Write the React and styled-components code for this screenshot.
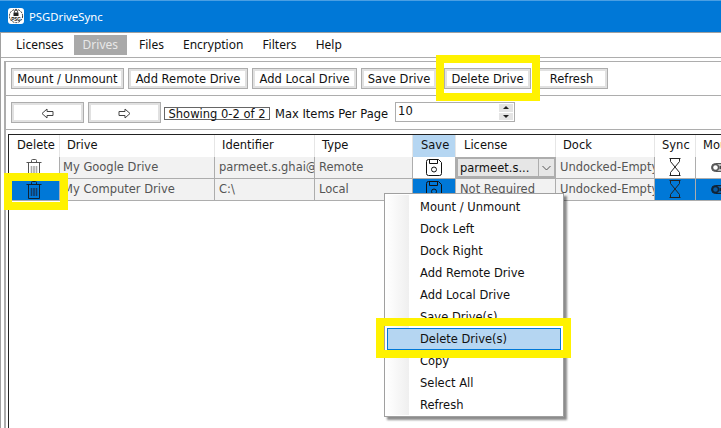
import React from 'react'
import styled, { createGlobalStyle } from 'styled-components'

const GlobalStyle = createGlobalStyle`
  html, body {
    margin: 0;
    padding: 0;
    background: #fff;
  }
`

const uiFont = `'DejaVu Sans', Verdana, sans-serif`
const titleFont = `'Noto Sans', 'Open Sans', sans-serif`

const Window = styled.div`
  position: relative;
  width: 721px;
  height: 428px;
  overflow: hidden;
  background: #fff;
  font-family: ${uiFont};
  font-size: 11.5px;
  color: #111;
`
const TitleBar = styled.div`
  display: flex;
  align-items: center;
  gap: 5px;
  height: 33px;
  padding-left: 8px;
  padding-bottom: 1px;
  box-sizing: border-box;
  background: #0078d7;
  border-top: 1px solid #4a9fe3;
  border-bottom: 1px solid #a0a0a0;
  color: #fff;
  font-family: ${titleFont};
  font-size: 11.3px;
`
const Body = styled.div`
  border-left: 1px solid #a0a0a0;
  height: 395px;
`
const MenuBar = styled.div`
  display: flex;
  align-items: center;
  height: 24px;
  padding-left: 6px;
  border-bottom: 1px solid #adadad;
  font-family: ${titleFont};
  font-size: 12px;
`
const MenuItem = styled.div`
  padding: 0 9px;
  margin-right: ${p => p.$after}px;
  height: 20px;
  line-height: 20px;
  background: ${p => (p.$active ? '#a9a9a9' : 'transparent')};
  color: ${p => (p.$active ? '#e8e8e8' : '#111')};
`
const Frame = styled.div`
  margin: 3px -10px 0 3px;
  border-top: 1px solid #adadad;
  border-left: 2px solid #adadad;
`
const ToolRow = styled.div`
  display: flex;
  align-items: flex-start;
  gap: 4px;
  height: 34px;
  padding: 6px 0 0 5px;
  box-sizing: border-box;
  border-bottom: 1px solid #adadad;
`
const Button = styled.button`
  width: ${p => p.$width}px;
  height: 21px;
  margin-left: ${p => p.$before || 0}px;
  padding: 1px 0 0;
  box-sizing: border-box;
  border: 1px solid #adadad;
  box-shadow: inset 0 0 0 2px #e1e1e1;
  background: #fff;
  font: inherit;
  color: inherit;
  display: flex;
  align-items: center;
  justify-content: center;
  flex: none;
`
const ShowingLabel = styled.div`
  width: 106px;
  height: 13px;
  margin: 5px 0 0 -1px;
  box-sizing: border-box;
  border: 1px solid #666;
  display: flex;
  align-items: center;
  justify-content: center;
  white-space: nowrap;
`
const PlainLabel = styled.div`
  margin: 5px 0 0 1px;
  white-space: nowrap;
`
const Spinner = styled.div`
  display: flex;
  width: 120px;
  height: 20px;
  margin-left: 3px;
  box-sizing: border-box;
  border: 1px solid #adadad;
`
const SpinnerValue = styled.div`
  flex: 1;
  padding: 0 0 0 2px;
  line-height: 17px;
`
const SpinnerButtons = styled.div`
  display: flex;
  flex-direction: column;
  gap: 1px;
  width: 14px;
  padding: 1px 1px 1px 0;
`
const SpinnerButton = styled.div`
  flex: 1;
  background: #e4e4e4;
  display: flex;
  align-items: center;
  justify-content: center;
  &::before {
    content: '';
    border-left: 3px solid transparent;
    border-right: 3px solid transparent;
    ${p => (p.$down ? 'border-top: 3px solid #222;' : 'border-bottom: 3px solid #222;')}
  }
`
const TableArea = styled.div`
  margin: 4px 0 0 2px;
  height: 300px;
  border-left: 1px solid #222;
  border-top: 1px solid #222;
`
const Row = styled.div`
  display: grid;
  grid-template-columns: 51px 155px 100px 98px 43px 100px 99px 41px 60px;
  height: 22px;
  box-sizing: border-box;
  border-bottom: ${p => (p.$head ? 'none' : '1px solid #adadad')};
`
const HeadCell = styled.div`
  padding-left: ${p => p.$pad}px;
  line-height: 21px;
  white-space: nowrap;
  overflow: hidden;
  border-right: 1px solid #e6e6e6;
  background: ${p => (p.$active ? '#b5d6f2' : '#fff')};
`
const Cell = styled.div`
  display: flex;
  align-items: center;
  padding: 0 0 2px ${p => p.$pad ?? 4}px;
  box-sizing: border-box;
  white-space: nowrap;
  overflow: hidden;
  color: #555;
  background: #f2f2f2;
  border-right: 1px solid #adadad;
`
const ComboCell = styled(Cell)`
  padding: 0;
`
const IconCell = styled.div`
  display: flex;
  justify-content: ${p => (p.$left ? 'flex-start' : 'center')};
  padding-left: ${p => (p.$left ? 15 : 0)}px;
  padding-top: 1px;
  box-sizing: border-box;
  overflow: hidden;
  background: ${p => (p.$selected ? '#0078d7' : '#fff')};
  border-right: 1px solid #adadad;
`
const Combo = styled.div`
  display: flex;
  width: 100px;
  height: 21px;
  box-sizing: border-box;
  border: 2px solid #adadad;
  background: #e6e6e6;
  color: #111;
  flex: none;
`
const ComboText = styled.div`
  flex: 1;
  padding-left: 2px;
  line-height: 19px;
`
const ComboArrow = styled.div`
  width: 15px;
  display: flex;
  align-items: center;
  justify-content: center;
  border-left: 1px solid #adadad;
`
const ContextMenu = styled.div`
  position: absolute;
  left: 384px;
  top: 193px;
  width: 180px;
  height: 224px;
  box-sizing: border-box;
  padding: 2px;
  background: #fff;
  border: 1px solid #a0a0a0;
  box-shadow: 3px 3px 2px rgba(0, 0, 0, 0.45);
  &::before {
    content: '';
    position: absolute;
    left: 1px;
    top: 1px;
    bottom: 1px;
    width: 23px;
    background: linear-gradient(to right, #fff, #efefef);
  }
`
const ContextItem = styled.div`
  position: relative;
  height: 22px;
  line-height: 22px;
  padding-left: 33px;
  box-sizing: border-box;
  white-space: nowrap;
  ${p => p.$active && `
    background: #b5d6f2;
    border: 1px solid #0078d7;
    line-height: 20px;
    padding-left: 32px;
  `}
`
const Highlight = styled.div`
  position: absolute;
  left: ${p => p.$x}px;
  top: ${p => p.$y}px;
  width: ${p => p.$w}px;
  height: ${p => p.$h}px;
  box-sizing: border-box;
  border: 8px solid #fff200;
`

const Logo = () => (
  <svg width="16" height="16" viewBox="0 0 16 16">
    <rect x="0" y="0" width="16" height="16" rx="3" fill="#fff" />
    <circle cx="8" cy="8" r="6.6" fill="none" stroke="#333" strokeWidth="1" strokeDasharray="2 1" />
    <rect x="5.5" y="4.5" width="5" height="3.5" fill="#222" />
    <path d="M6.5 4.5V3.5a1.5 1.5 0 0 1 3 0v1" fill="none" stroke="#222" />
    <text x="8" y="12.6" fontSize="4.6" fontWeight="700" textAnchor="middle" fontFamily="'Liberation Sans', sans-serif" fill="#111">PSG</text>
  </svg>
)

const ArrowIcon = ({ right }) => (
  <svg width="13" height="11" viewBox="0 0 13 11" style={{ transform: right ? 'scaleX(-1)' : 'none' }}>
    <path d="M1 5.5 6 1v2.5h6v4H6V10z" fill="#fff" stroke="#444" />
  </svg>
)

const TrashIcon = ({ color = '#555', bar = '#aaa' }) => (
  <svg width="16" height="19" viewBox="0 0 16 19">
    <path d="M0.5 4.5h15M5.5 4.5V2.5a1 1 0 0 1 1-1h3a1 1 0 0 1 1 1v2" fill="none" stroke={color} />
    <path d="M2.5 4.5V18.5H13.5V4.5" fill="none" stroke={color} />
    <path d="M5.5 8v8M8 8v8M10.5 8v8" stroke={bar} strokeWidth="1.6" />
  </svg>
)

const SaveIcon = () => (
  <svg width="16" height="17" viewBox="0 0 16 17" style={{ marginTop: 1 }}>
    <path d="M0.5 2.5a2 2 0 0 1 2-2h10l3 3v11a2 2 0 0 1-2 2h-11a2 2 0 0 1-2-2z" fill="none" stroke="#111" />
    <path d="M3.5 0.5v4h8v-4" fill="none" stroke="#111" />
    <circle cx="8" cy="10.5" r="2.5" fill="none" stroke="#111" />
  </svg>
)

const HourglassIcon = () => (
  <svg width="12" height="18" viewBox="0 0 12 18">
    <path d="M0.5 0.5h11M0.5 17.5h11M1.5 0.5v3L6 9 1.5 14.5v3M10.5 0.5v3L6 9l4.5 5.5v3" fill="none" stroke="#222" />
  </svg>
)

const ToggleIcon = ({ ring = '#555', track = '#bbb', knob = '#fff', dot = '#444' }) => (
  <svg width="16" height="9" viewBox="0 0 16 9" style={{ marginTop: 5 }}>
    <rect x="0.5" y="0.5" width="22" height="8" rx="4" fill={track} stroke={ring} />
    <circle cx="4.5" cy="4.5" r="3" fill={knob} stroke={ring} strokeWidth="1.4" />
    <rect x="8.5" y="3" width="7" height="3" fill={dot} />
  </svg>
)

const ChevronIcon = () => (
  <svg width="9" height="6" viewBox="0 0 9 6">
    <path d="M0.5 1 4.5 5 8.5 1" fill="none" stroke="#555" />
  </svg>
)

const menus = [['Licenses', 1], ['Drives', 3], ['Files', 1], ['Encryption', 1], ['Filters', 1], ['Help', 0]]
const tools = [['Mount / Unmount', 113, 0], ['Add Remote Drive', 120, 0], ['Add Local Drive', 105, 0], ['Save Drive', 76, 0], ['Delete Drive', 87, 3], ['Refresh', 73, 0]]
const heads = [['Delete', 8], ['Drive', 7], ['Identifier', 7], ['Type', 7], ['Save', 8], ['License', 8], ['Dock', 7], ['Sync', 7], ['Mount', 7]]
const contextItems = ['Mount / Unmount', 'Dock Left', 'Dock Right', 'Add Remote Drive', 'Add Local Drive', 'Save Drive(s)', 'Delete Drive(s)', 'Copy', 'Select All', 'Refresh']

export default function App() {
  return (
    <Window>
      <GlobalStyle />
      <TitleBar>
        <Logo />
        PSGDriveSync
      </TitleBar>
      <Body>
        <MenuBar>
          {menus.map(([name, after]) => (
            <MenuItem key={name} $after={after} $active={name === 'Drives'}>{name}</MenuItem>
          ))}
        </MenuBar>
        <Frame>
          <ToolRow>
            {tools.map(([name, width, before]) => (
              <Button key={name} $width={width} $before={before}>{name}</Button>
            ))}
          </ToolRow>
          <ToolRow>
            <Button $width={73}><ArrowIcon /></Button>
            <Button $width={73}><ArrowIcon right /></Button>
            <ShowingLabel>Showing 0-2 of 2</ShowingLabel>
            <PlainLabel>Max Items Per Page</PlainLabel>
            <Spinner>
              <SpinnerValue>10</SpinnerValue>
              <SpinnerButtons>
                <SpinnerButton />
                <SpinnerButton $down />
              </SpinnerButtons>
            </Spinner>
          </ToolRow>
          <TableArea>
            <Row $head>
              {heads.map(([name, pad]) => (
                <HeadCell key={name} $pad={pad} $active={name === 'Save'}>{name}</HeadCell>
              ))}
            </Row>
            <Row>
              <IconCell><TrashIcon /></IconCell>
              <Cell $pad={3}>My Google Drive</Cell>
              <Cell>parmeet.s.ghai@gmail.com</Cell>
              <Cell>Remote</Cell>
              <IconCell><SaveIcon /></IconCell>
              <ComboCell>
                <Combo>
                  <ComboText>parmeet.s...</ComboText>
                  <ComboArrow><ChevronIcon /></ComboArrow>
                </Combo>
              </ComboCell>
              <Cell>Undocked-Empty</Cell>
              <IconCell><HourglassIcon /></IconCell>
              <IconCell $left><ToggleIcon /></IconCell>
            </Row>
            <Row>
              <IconCell $selected><TrashIcon color="#123" bar="#123a66" /></IconCell>
              <Cell $pad={3}>My Computer Drive</Cell>
              <Cell>C:\</Cell>
              <Cell>Local</Cell>
              <IconCell $selected><SaveIcon /></IconCell>
              <Cell>Not Required</Cell>
              <Cell>Undocked-Empty</Cell>
              <IconCell $selected><HourglassIcon /></IconCell>
              <IconCell $selected $left><ToggleIcon ring="#123" track="#0a5aa0" knob="#0a5aa0" dot="#123" /></IconCell>
            </Row>
          </TableArea>
        </Frame>
      </Body>
      <ContextMenu>
        {contextItems.map(name => (
          <ContextItem key={name} $active={name === 'Delete Drive(s)'}>{name}</ContextItem>
        ))}
      </ContextMenu>
      <Highlight $x={436} $y={55} $w={104} $h={46} />
      <Highlight $x={4} $y={173} $w={64} $h={37} />
      <Highlight $x={376} $y={318} $w={195} $h={40} />
    </Window>
  )
}
